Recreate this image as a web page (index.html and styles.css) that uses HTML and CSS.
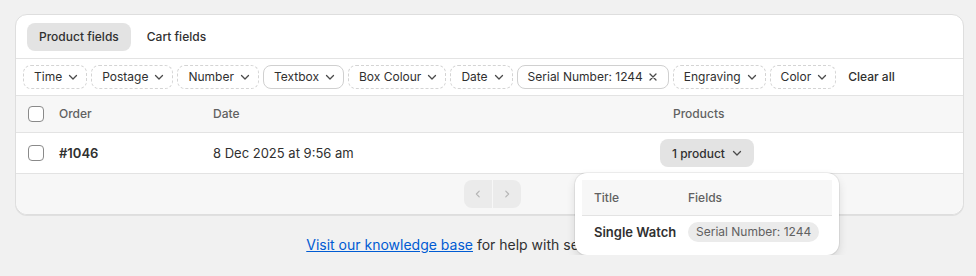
FILE: index.html
```html
<!DOCTYPE html>
<html lang="en">
<head>
    <meta charset="UTF-8">
    <meta name="viewport" content="width=device-width, initial-scale=1.0">
    <title>Orders</title>
    <link rel="stylesheet" href="styles.css">
</head>
<body>

<div class="card">
    <!-- Tabs -->
    <div class="tabs">
        <button class="tab active">Product fields</button>
        <button class="tab">Cart fields</button>
    </div>

    <!-- Filters -->
    <div class="filters">
        <span class="pill">Time<svg class="chev" viewBox="0 0 10 10"><path d="M1.5 3.5l3.5 3.5 3.5-3.5"/></svg></span>
        <span class="pill">Postage<svg class="chev" viewBox="0 0 10 10"><path d="M1.5 3.5l3.5 3.5 3.5-3.5"/></svg></span>
        <span class="pill">Number<svg class="chev" viewBox="0 0 10 10"><path d="M1.5 3.5l3.5 3.5 3.5-3.5"/></svg></span>
        <span class="pill solid">Textbox<svg class="chev" viewBox="0 0 10 10"><path d="M1.5 3.5l3.5 3.5 3.5-3.5"/></svg></span>
        <span class="pill">Box Colour<svg class="chev" viewBox="0 0 10 10"><path d="M1.5 3.5l3.5 3.5 3.5-3.5"/></svg></span>
        <span class="pill">Date<svg class="chev" viewBox="0 0 10 10"><path d="M1.5 3.5l3.5 3.5 3.5-3.5"/></svg></span>
        <span class="pill solid">Serial Number: 1244<svg class="chev close" viewBox="0 0 10 10"><path d="M2 2l6 6M8 2l-6 6"/></svg></span>
        <span class="pill">Engraving<svg class="chev" viewBox="0 0 10 10"><path d="M1.5 3.5l3.5 3.5 3.5-3.5"/></svg></span>
        <span class="pill">Color<svg class="chev" viewBox="0 0 10 10"><path d="M1.5 3.5l3.5 3.5 3.5-3.5"/></svg></span>
        <span class="clear-all">Clear all</span>
    </div>

    <!-- Table -->
    <div class="row head">
        <span class="checkbox"></span>
        <span>Order</span>
        <span>Date</span>
        <span class="products-head">Products</span>
    </div>
    <div class="row">
        <span class="checkbox"></span>
        <span class="order-no">#1046</span>
        <span>8 Dec 2025 at 9:56 am</span>
        <span class="products-cell">
            <button class="product-btn">1 product<svg class="chev" viewBox="0 0 10 10"><path d="M1.5 3.5l3.5 3.5 3.5-3.5"/></svg></button>
            <!-- Popover -->
            <div class="popover">
                <div class="pop-row pop-head">
                    <span>Title</span>
                    <span>Fields</span>
                </div>
                <div class="pop-row">
                    <span class="pop-title">Single Watch</span>
                    <span class="badge">Serial Number: 1244</span>
                </div>
            </div>
        </span>
    </div>

    <!-- Pagination -->
    <div class="pager">
        <button class="page-btn prev"><svg viewBox="0 0 20 20"><path d="M11.5 6.5l-3.5 3.5 3.5 3.5"/></svg></button>
        <button class="page-btn next"><svg viewBox="0 0 20 20"><path d="M8.5 6.5l3.5 3.5-3.5 3.5"/></svg></button>
    </div>
</div>

<p class="help"><a href="#">Visit our knowledge base</a> for help with setting up fields.</p>

</body>
</html>
```

FILE: styles.css
```css
body {
    margin: 0;
    padding: 14px 12px 0 15px;
    background-color: #f1f1f1;
    font-family: Inter, "Noto Sans", sans-serif;
    font-size: 13px;
    line-height: 20px;
    color: #303030;
}

button {
    font-family: inherit;
    font-size: 12px;
    font-weight: 500;
    color: inherit;
    border: none;
    cursor: pointer;
}

/* Card */
.card {
    background-color: white;
    border: 1px solid #dedede;
    border-radius: 12px;
    box-shadow: 0 1px 0 rgba(0,0,0,0.07);
}

/* Tabs */
.tabs {
    display: flex;
    gap: 4px;
    padding: 8px 11px 7px;
    border-bottom: 1px solid #e3e3e3;
}

.tab {
    background: none;
    padding: 4px 12px;
    line-height: 20px;
    border-radius: 8px;
}

.tab.active {
    background-color: #e3e3e3;
}

/* Filters */
.filters {
    display: flex;
    align-items: center;
    gap: 4px;
    padding: 6px 7px;
    border-bottom: 1px solid #e3e3e3;
    font-size: 12px;
}

.pill {
    display: inline-flex;
    align-items: center;
    height: 22px;
    padding: 0 8px 0 10px;
    border: 1px dashed #d4d4d4;
    border-radius: 8px;
    white-space: nowrap;
}

.pill.solid {
    border-style: solid;
    border-color: #d0d0d0;
}

.chev {
    width: 10px;
    height: 10px;
    margin-left: 6px;
    fill: none;
    stroke: #4a4a4a;
    stroke-width: 1.3;
    stroke-linecap: round;
    stroke-linejoin: round;
}

.close {
    margin-left: 5px;
    margin-right: 2px;
}

.clear-all {
    padding: 0 10px 0 8px;
    font-weight: 500;
}

/* Table rows */
.row {
    display: grid;
    grid-template-columns: 31px 154px 447px 1fr;
    align-items: center;
    padding-left: 12px;
    height: 40px;
    border-bottom: 1px solid #e3e3e3;
}

.row.head {
    height: 36px;
    background-color: #f7f7f7;
    color: #616161;
    font-size: 12px;
    font-weight: 500;
}

.checkbox {
    width: 14px;
    height: 14px;
    border: 1px solid #8a8a8a;
    border-radius: 4px;
    background: white;
}

.products-head {
    padding-left: 13px;
}

.order-no {
    font-weight: 600;
}

.products-cell {
    position: relative;
}

.product-btn {
    display: inline-flex;
    align-items: center;
    height: 28px;
    padding: 0 12px;
    border-radius: 8px;
    background-color: #e3e3e3;
}

.product-btn .chev {
    margin-left: 7px;
}

/* Popover */
.popover {
    position: absolute;
    top: 34px;
    left: -85px;
    width: 250px;
    padding: 7px;
    background: white;
    border-radius: 12px;
    box-shadow: 0 4px 10px rgba(0,0,0,0.12), 0 0 0 1px rgba(0,0,0,0.06);
    z-index: 1;
}

.pop-row {
    display: grid;
    grid-template-columns: 94px 1fr;
    align-items: center;
    padding-left: 12px;
    height: 32px;
}

.pop-row.pop-head {
    height: 35px;
    background-color: #f7f7f7;
    border-bottom: 1px solid #e3e3e3;
    color: #616161;
    font-size: 12px;
    font-weight: 500;
}

.pop-title {
    font-weight: 600;
}

.badge {
    justify-self: start;
    padding: 0 8px;
    border-radius: 10px;
    background-color: #ebebeb;
    color: #616161;
    font-size: 12px;
    line-height: 20px;
}

/* Pagination */
.pager {
    display: flex;
    justify-content: center;
    gap: 1px;
    padding: 6px 0 6px 6px;
    background-color: #f7f7f7;
    border-radius: 0 0 12px 12px;
}

.page-btn {
    width: 28px;
    height: 28px;
    padding: 0;
    background-color: #ebebeb;
    display: flex;
    align-items: center;
    justify-content: center;
}

.page-btn.prev {
    border-radius: 8px 0 0 8px;
}

.page-btn.next {
    border-radius: 0 8px 8px 0;
}

.page-btn svg {
    width: 16px;
    height: 16px;
    fill: none;
    stroke: #b5b5b5;
    stroke-width: 1.5;
    stroke-linecap: round;
    stroke-linejoin: round;
}

/* Help text */
.help {
    margin: 20px 0 0;
    text-align: center;
    font-size: 14px;
}

.help a {
    color: #005bd3;
}
```
